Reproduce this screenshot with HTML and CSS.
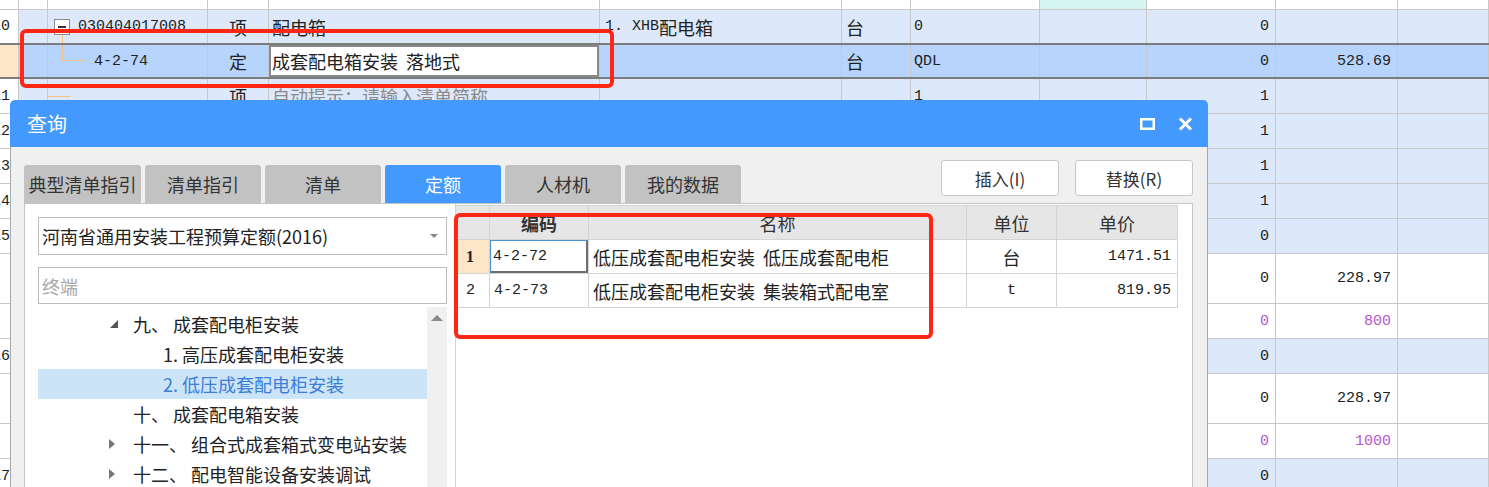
FILE: index.html
```html
<!DOCTYPE html>
<html>

<head>
    <meta charset="utf-8">
    <title>查询</title>
    <link rel="stylesheet" href="styles.css">
</head>

<body>
    <!-- sheet behind the dialog -->
    <section class="sheet">
        <div class="row top">
            <div class="c0"></div>
            <div class="c1"><span class="vline"></span></div>
            <div class="c2"></div><div class="c3"></div><div class="c4"></div><div class="c5"></div>
            <div class="c6"></div><div class="c7 cyan"></div><div class="c8"></div><div class="c9"></div><div class="c10"></div>
        </div>
        <div class="row blue above-sel">
            <div class="c0 num">10</div>
            <div class="c1 code"><span class="vline"></span><span class="fold"></span><span class="stem"></span><span class="mono">030404017008</span></div>
            <div class="c2 center">项</div>
            <div class="c3">配电箱</div>
            <div class="c4"><span class="mono">1. XHB</span>配电箱</div>
            <div class="c5">台</div>
            <div class="c6 mono">0</div>
            <div class="c7"></div>
            <div class="c8 right mono">0</div>
            <div class="c9"></div><div class="c10"></div>
        </div>
        <div class="row sel">
            <div class="c0 peach"></div>
            <div class="c1 code sub"><span class="vline"></span><span class="branch"></span><span class="mono">4-2-74</span></div>
            <div class="c2 center">定</div>
            <div class="c3 editor">成套配电箱安装 落地式</div>
            <div class="c4"></div>
            <div class="c5">台</div>
            <div class="c6 mono">QDL</div>
            <div class="c7"></div>
            <div class="c8 right mono">0</div>
            <div class="c9 right mono">528.69</div>
            <div class="c10"></div>
        </div>
        <div class="row blue">
            <div class="c0 num">11</div>
            <div class="c1"><span class="vline"></span><span class="hbranch"></span></div>
            <div class="c2 center">项</div>
            <div class="c3 hint">自动提示：请输入清单简称</div>
            <div class="c4"></div><div class="c5"></div>
            <div class="c6 mono">1</div>
            <div class="c7"></div>
            <div class="c8 right mono">1</div>
            <div class="c9"></div><div class="c10"></div>
        </div>
        <div class="row blue">
            <div class="c0 num">12</div><div class="c1"></div><div class="c2"></div><div class="c3"></div><div class="c4"></div><div class="c5"></div><div class="c6"></div><div class="c7"></div>
            <div class="c8 right mono">1</div><div class="c9"></div><div class="c10"></div>
        </div>
        <div class="row blue">
            <div class="c0 num">13</div><div class="c1"></div><div class="c2"></div><div class="c3"></div><div class="c4"></div><div class="c5"></div><div class="c6"></div><div class="c7"></div>
            <div class="c8 right mono">1</div><div class="c9"></div><div class="c10"></div>
        </div>
        <div class="row blue">
            <div class="c0 num">14</div><div class="c1"></div><div class="c2"></div><div class="c3"></div><div class="c4"></div><div class="c5"></div><div class="c6"></div><div class="c7"></div>
            <div class="c8 right mono">1</div><div class="c9"></div><div class="c10"></div>
        </div>
        <div class="row blue">
            <div class="c0 num">15</div><div class="c1"></div><div class="c2"></div><div class="c3"></div><div class="c4"></div><div class="c5"></div><div class="c6"></div><div class="c7"></div>
            <div class="c8 right mono">0</div><div class="c9"></div><div class="c10"></div>
        </div>
        <div class="row tall">
            <div class="c0"></div><div class="c1"></div><div class="c2"></div><div class="c3"></div><div class="c4"></div><div class="c5"></div><div class="c6"></div><div class="c7"></div>
            <div class="c8 right mono">0</div><div class="c9 right mono">228.97</div><div class="c10"></div>
        </div>
        <div class="row">
            <div class="c0"></div><div class="c1"></div><div class="c2"></div><div class="c3"></div><div class="c4"></div><div class="c5"></div><div class="c6"></div><div class="c7"></div>
            <div class="c8 right mono purple">0</div><div class="c9 right mono purple">800</div><div class="c10"></div>
        </div>
        <div class="row blue">
            <div class="c0 num">16</div><div class="c1"></div><div class="c2"></div><div class="c3"></div><div class="c4"></div><div class="c5"></div><div class="c6"></div><div class="c7"></div>
            <div class="c8 right mono">0</div><div class="c9"></div><div class="c10"></div>
        </div>
        <div class="row tall">
            <div class="c0"></div><div class="c1"></div><div class="c2"></div><div class="c3"></div><div class="c4"></div><div class="c5"></div><div class="c6"></div><div class="c7"></div>
            <div class="c8 right mono">0</div><div class="c9 right mono">228.97</div><div class="c10"></div>
        </div>
        <div class="row">
            <div class="c0"></div><div class="c1"></div><div class="c2"></div><div class="c3"></div><div class="c4"></div><div class="c5"></div><div class="c6"></div><div class="c7"></div>
            <div class="c8 right mono purple">0</div><div class="c9 right mono purple">1000</div><div class="c10"></div>
        </div>
        <div class="row blue">
            <div class="c0 num">17</div><div class="c1"></div><div class="c2"></div><div class="c3"></div><div class="c4"></div><div class="c5"></div><div class="c6"></div><div class="c7"></div>
            <div class="c8 right mono">0</div><div class="c9"></div><div class="c10"></div>
        </div>
    </section>

    <div class="mark mark-row"></div>

    <!-- query dialog -->
    <section class="dialog">
        <div class="dialog-title">
            <span class="title">查询</span>
            <div class="win-btns">
                <svg width="15" height="12" viewBox="0 0 15 12"><rect x="1.25" y="1.25" width="12.5" height="9.5" fill="none" stroke="#fff" stroke-width="2.5"/></svg>
                <svg width="15" height="14" viewBox="0 0 15 14"><path d="M2 1.5 L13 12.5 M13 1.5 L2 12.5" stroke="#fff" stroke-width="3"/></svg>
            </div>
        </div>
        <div class="dialog-body">
            <div class="toolbar">
                <div class="tabs">
                    <div class="tab first">典型清单指引</div>
                    <div class="tab">清单指引</div>
                    <div class="tab">清单</div>
                    <div class="tab active">定额</div>
                    <div class="tab">人材机</div>
                    <div class="tab">我的数据</div>
                </div>
                <div class="actions">
                    <button>插入(I)</button>
                    <button>替换(R)</button>
                </div>
            </div>
            <div class="content">
                <div class="left-pane">
                    <div class="select">
                        <span>河南省通用安装工程预算定额(2016)</span>
                        <span class="caret"></span>
                    </div>
                    <div class="search">终端</div>
                    <div class="tree">
                        <div class="tree-list">
                            <div class="node lv1"><span class="tri open"></span>九、 成套配电柜安装</div>
                            <div class="node lv2">1. 高压成套配电柜安装</div>
                            <div class="node lv2 current">2. 低压成套配电柜安装</div>
                            <div class="node lv1"><span class="tri"></span>十、 成套配电箱安装</div>
                            <div class="node lv1"><span class="tri closed"></span>十一、 组合式成套箱式变电站安装</div>
                            <div class="node lv1"><span class="tri closed"></span>十二、 配电智能设备安装调试</div>
                        </div>
                        <div class="scrollbar"><span class="up"></span></div>
                    </div>
                </div>
                <div class="right-pane">
                    <div class="grid">
                        <div class="hd"></div>
                        <div class="hd peach bold">编码</div>
                        <div class="hd">名称</div>
                        <div class="hd">单位</div>
                        <div class="hd">单价</div>

                        <div class="rn peach first-num">1</div>
                        <div class="mono focus">4-2-72</div>
                        <div class="name">低压成套配电柜安装 低压成套配电柜</div>
                        <div class="center">台</div>
                        <div class="right mono">1471.51</div>

                        <div class="rn">2</div>
                        <div class="mono">4-2-73</div>
                        <div class="name">低压成套配电柜安装 集装箱式配电室</div>
                        <div class="center mono">t</div>
                        <div class="right mono">819.95</div>
                    </div>
                </div>
            </div>
        </div>
    </section>

    <div class="mark mark-grid"></div>
</body>

</html>
```

FILE: styles.css
```css
* {
    box-sizing: border-box;
}

html,
body {
    margin: 0;
    height: 100%;
}

body {
    position: relative;
    overflow: hidden;
    background: #fff;
    color: #222;
    font-family: "Noto Sans CJK SC", sans-serif;
    font-size: 18px;
}

.mono {
    font-family: "Liberation Mono", "Noto Sans CJK SC", monospace;
    font-size: 15px;
}

/* sheet */

.sheet {
    display: flex;
    flex-direction: column;
}

.row {
    display: flex;
    height: 35px;
    border-bottom: 1px solid #c8c8c8;
}

.row.top {
    height: 10px;
}

.row.tall {
    height: 50px;
}

.row.above-sel {
    height: 33px;
    border-bottom: none;
}

.row.sel {
    height: 36px;
    border-top: 2px solid #7c7c7c;
    border-bottom: 2px solid #7c7c7c;
    background: #b7d5fc;
}

.row>div {
    position: relative;
    display: flex;
    align-items: center;
    overflow: hidden;
    white-space: nowrap;
    padding: 0 3px;
    border-right: 1px solid #c8c8c8;
}

.row.blue>div {
    background: #dde9fb;
}

.row>div.c0 {
    background: #fff;
}

.c0 { width: 19px; }
.c1 { width: 189px; }
.c2 { width: 61px; }
.c3 { width: 331px; }
.c4 { width: 242px; }
.c5 { width: 69px; }
.c6 { width: 129px; }
.c7 { width: 107px; }
.c8 { width: 129px; }
.c9 { width: 122px; }
.c10 { flex: 1; }

.row>div.num {
    justify-content: flex-end;
    padding: 0 8px 0 0;
    font-family: "Liberation Mono", monospace;
    font-size: 15px;
}

.row>div.peach,
.grid .peach {
    background: #fde5c8;
}

.row>.cyan {
    background: #d6f5f3;
}

.row>.center {
    justify-content: center;
}

.row>.right {
    justify-content: flex-end;
    padding-right: 6px;
}

.row>.c4 {
    padding-left: 5px;
}

.row>.c5 {
    padding-left: 4px;
}

.purple {
    color: #bb55cc;
}

.hint {
    color: #8a8a8a;
}

.row>.editor {
    background: #fff;
    box-shadow: inset 0 0 0 2px #8a8a8a;
    word-spacing: 4px;
}

.row>.code {
    padding-left: 59px;
}

.row>.code.sub {
    padding-left: 75px;
}

.vline {
    position: absolute;
    left: 28px;
    top: 0;
    bottom: 0;
    width: 1px;
    background: #f7c27f;
}

.fold {
    position: absolute;
    left: 35px;
    top: 9px;
    width: 16px;
    height: 16px;
    border: 1px solid #8a8a8a;
    background: #fff;
}

.fold::after {
    content: "";
    position: absolute;
    left: 3px;
    right: 3px;
    top: 6px;
    height: 2px;
    background: #333;
}

.stem {
    position: absolute;
    left: 43px;
    top: 25px;
    bottom: 0;
    width: 1px;
    background: #f7c27f;
}

.branch {
    position: absolute;
    left: 43px;
    top: 0;
    width: 24px;
    height: 16px;
    border-left: 1px solid #f7c27f;
    border-bottom: 1px solid #f7c27f;
}

.hbranch {
    position: absolute;
    left: 28px;
    top: 17px;
    width: 24px;
    height: 1px;
    background: #f7c27f;
}

/* red annotation frames */

.mark {
    position: absolute;
    border: 4px solid #ff2616;
    border-radius: 6px;
}

.mark-row {
    left: 20px;
    top: 29px;
    width: 594px;
    height: 59px;
}

.mark-grid {
    left: 454px;
    top: 213px;
    width: 479px;
    height: 126px;
}

/* dialog */

.dialog {
    position: absolute;
    left: 10px;
    top: 100px;
    width: 1198px;
    height: 400px;
    display: flex;
    flex-direction: column;
}

.dialog-title {
    height: 47px;
    display: flex;
    align-items: center;
    padding: 0 15px 0 17px;
    background: #4499fe;
    border-radius: 5px 5px 0 0;
    color: #fff;
    font-size: 20px;
}

.dialog-title .title {
    flex: 1;
}

.win-btns {
    display: flex;
    align-items: center;
    gap: 23px;
}

.dialog-body {
    flex: 1;
    display: flex;
    flex-direction: column;
    padding: 13px 14px 0 13px;
    background: #f0f0f0;
    border: 1px solid #a9a9a9;
    border-top: none;
}

.toolbar {
    display: flex;
    align-items: flex-end;
}

.tabs {
    display: flex;
    gap: 4px;
}

.tab {
    width: 116px;
    height: 38px;
    display: flex;
    align-items: center;
    justify-content: center;
    background: #c2c2c2;
    border-radius: 3px 3px 0 0;
    color: #333;
    font-size: 18px;
}

.tab.first {
    width: 117px;
}

.tab.active {
    background: #4499fe;
    color: #fff;
}

.actions {
    margin-left: auto;
    margin-bottom: 7px;
    display: flex;
    gap: 16px;
}

button {
    width: 118px;
    height: 36px;
    background: #fff;
    border: 1px solid #c8c8c8;
    border-radius: 3px;
    color: #333;
    font-family: "Noto Sans CJK SC", sans-serif;
    font-size: 17px;
    padding: 0;
}

.content {
    flex: 1;
    display: flex;
    background: #fff;
    border: 1px solid #c4c4c4;
}

.left-pane {
    width: 431px;
    display: flex;
    flex-direction: column;
    padding: 13px 8px 0 13px;
    border-right: 1px solid #d2d2d2;
}

.select,
.search {
    display: flex;
    align-items: center;
    padding-left: 3px;
    border: 1px solid #bdbdbd;
}

.select {
    height: 38px;
    justify-content: space-between;
    padding-right: 8px;
}

.caret {
    border-left: 4px solid transparent;
    border-right: 4px solid transparent;
    border-top: 4px solid #888;
}

.search {
    height: 37px;
    margin-top: 12px;
    color: #aaa;
}

.tree {
    flex: 1;
    display: flex;
    margin-top: 3px;
}

.tree-list {
    flex: 1;
    padding-top: 2px;
}

.node {
    height: 30px;
    display: flex;
    align-items: center;
    white-space: nowrap;
}

.node.lv1 {
    padding-left: 70px;
}

.node.lv2 {
    padding-left: 125px;
}

.node.current {
    background: #cce4f8;
    color: #3b7dd8;
}

.tri {
    width: 25px;
    height: 10px;
    position: relative;
}

.tri.open::before {
    content: "";
    position: absolute;
    left: 2px;
    top: 1px;
    border-left: 8px solid transparent;
    border-bottom: 8px solid #555;
}

.tri.closed::before {
    content: "";
    position: absolute;
    left: 1px;
    top: 0;
    border-top: 5px solid transparent;
    border-bottom: 5px solid transparent;
    border-left: 6px solid #777;
}

.scrollbar {
    width: 20px;
    background: #f0f0f0;
    display: flex;
    justify-content: center;
    padding-top: 8px;
}

.up {
    width: 0;
    height: 0;
    border-left: 6px solid transparent;
    border-right: 6px solid transparent;
    border-bottom: 6px solid #888;
}

.right-pane {
    flex: 1;
    padding-top: 1px;
}

.grid {
    display: grid;
    grid-template-columns: 34px 99px 378px 90px 121px;
    grid-template-rows: 35px 34px 34px;
    width: 722px;
}

.grid>div {
    display: flex;
    align-items: center;
    padding: 0 4px;
    white-space: nowrap;
    border-right: 1px solid #d4d4d4;
    border-bottom: 1px solid #d4d4d4;
}

.grid>.name {
    word-spacing: 4px;
}

.grid>.hd {
    justify-content: center;
    background: #e6e6e6;
    border-top: 1px solid #d4d4d4;
    color: #333;
}

.grid>.bold {
    font-weight: bold;
}

.grid>.center {
    justify-content: center;
}

.grid>.right {
    justify-content: flex-end;
    padding-right: 6px;
}

.grid>.rn {
    font-family: "Liberation Mono", monospace;
    font-size: 15px;
    padding-left: 10px;
}

.grid>.first-num {
    font-family: "Liberation Serif", serif;
    font-weight: bold;
    font-size: 16px;
}

.grid>.focus {
    padding-left: 3px;
    box-shadow: inset 1px 1px 0 #4a90d9, inset -2px -2px 0 #6e6e6e;
}
```
